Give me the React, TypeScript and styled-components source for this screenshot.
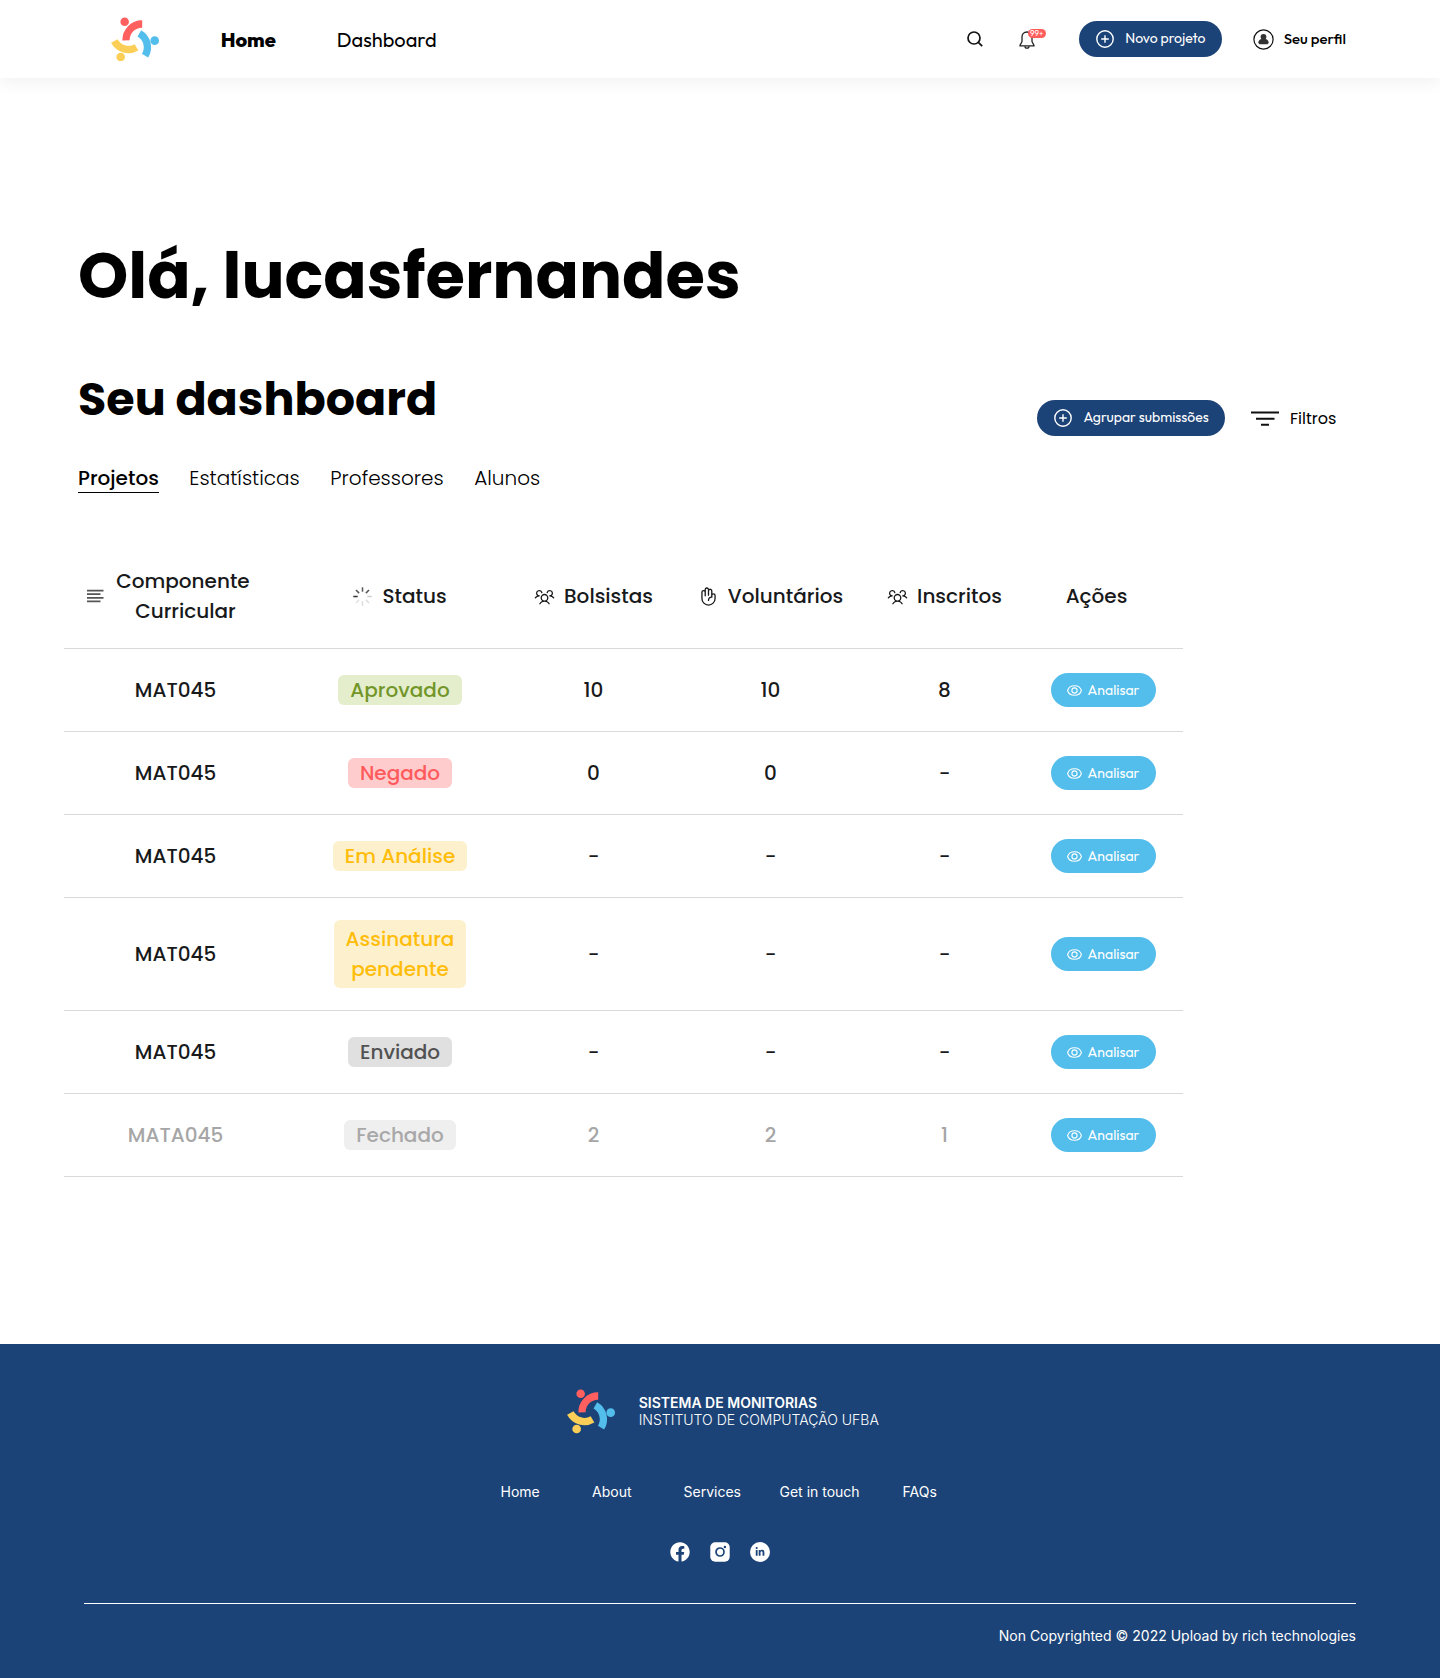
import React from "react";
import styled, { createGlobalStyle } from "styled-components";
import { PiUsersThree, PiHandPalm } from "react-icons/pi";
import { FaFacebook, FaLinkedinIn } from "react-icons/fa";

const navy = "#1c4377";
const sky = "#53bdeb";
const ink = "#18191b";
const poppins = `Poppins, Inter, "Liberation Sans", sans-serif`;
const outfit = `Outfit, Lato, "Liberation Sans", sans-serif`;

const GlobalStyle = createGlobalStyle`
  *, *::before, *::after { box-sizing: border-box; }
  body { margin: 0; background: #fff; color: ${ink}; font-family: ${poppins}; }
  h1, h2, p { margin: 0; }
  button { border: 0; padding: 0; background: none; color: inherit; font: inherit; white-space: nowrap; cursor: pointer; }
  svg { display: block; flex: none; }
`;

const Page = styled.div`
  width: 1440px;
  height: 1678px;
  display: flex;
  flex-direction: column;
`;

/* Top bar */
const TopBar = styled.header`
  flex: none;
  height: 78px;
  padding-left: 111px;
  display: flex;
  align-items: center;
  box-shadow: 0 4px 16px rgba(0, 0, 0, 0.06);
  font-family: ${outfit};
  color: #000;
`;
const Nav = styled.nav`
  width: 746px;
  margin-left: 61px;
  padding-top: 2px;
  display: flex;
  gap: 61px;
  font-size: 20px;
  line-height: 24px;
`;
const NavLink = styled.a<{ $active?: boolean }>`
  font-weight: ${(p) => (p.$active ? 800 : 370)};
`;
const BellButton = styled.button`
  position: relative;
  margin: 2px 44px 0 36px;
`;
const Badge = styled.span`
  position: absolute;
  left: 9px;
  top: -2px;
  width: 18px;
  height: 9px;
  border-radius: 5px;
  background: #ff5c5c;
  color: #fff;
  font-size: 8px;
  line-height: 9px;
  text-align: center;
`;
const PrimaryButton = styled.button<{ $width: number }>`
  width: ${(p) => p.$width}px;
  height: 36px;
  padding-left: 17px;
  display: flex;
  align-items: center;
  gap: 11.5px;
  border-radius: 18px;
  background: ${navy};
  color: #fff;
  font: 370 14px/18px ${outfit};
`;
const ButtonLabel = styled.span`
  padding-bottom: 2px;
`;
const Profile = styled.button`
  margin-left: 31px;
  display: flex;
  align-items: center;
  gap: 10px;
  font: 500 15px/20px ${outfit};
`;

/* Dashboard */
const Main = styled.main`
  flex: none;
  height: 1266px;
  padding: 150px 0 0 64px;
`;
const Greeting = styled.h1`
  padding-left: 14px;
  color: #000;
  font-size: 64px;
  line-height: 96px;
  font-weight: 700;
`;
const SectionHead = styled.div`
  width: 1272px;
  margin-top: 41px;
  padding-left: 14px;
  display: flex;
  justify-content: space-between;
`;
const SectionTitle = styled.h2`
  color: #000;
  font-size: 46px;
  line-height: 68px;
  font-weight: 700;
`;
const Tabs = styled.div`
  margin-top: 29px;
  display: flex;
  gap: 30.5px;
`;
const Tab = styled.button<{ $active?: boolean }>`
  height: 31px;
  border-bottom: 1px solid ${(p) => (p.$active ? "#000" : "transparent")};
  color: #000;
  font-size: 20px;
  line-height: 32px;
  font-weight: ${(p) => (p.$active ? 500 : 300)};
`;
const Actions = styled.div`
  height: 36px;
  margin-top: 35px;
  display: flex;
  align-items: center;
`;
const FilterButton = styled.button`
  width: 85px;
  margin-left: 26px;
  display: flex;
  align-items: center;
  gap: 11px;
  color: #000;
  font-size: 16px;
  line-height: 24px;
`;
const FilterLabel = styled.span`
  padding-top: 1px;
`;

/* Table */
const Table = styled.div`
  width: 1119px;
  margin-top: 51px;
`;
const Row = styled.div<{ $height: number; $muted?: boolean }>`
  height: ${(p) => p.$height}px;
  display: grid;
  grid-template-columns: 223px 226px 161px 193px 155px 161px;
  align-items: center;
  border-bottom: 1px solid #d9d9d9;
  font-size: 20px;
  line-height: 30px;
  font-weight: 500;
  color: ${(p) => (p.$muted ? "#a6a6a6" : ink)};
`;
const Cell = styled.div<{ $gap?: number; $padRight?: number }>`
  padding-right: ${(p) => p.$padRight ?? 0}px;
  display: flex;
  align-items: center;
  justify-content: center;
  gap: ${(p) => p.$gap ?? 0}px;
`;
const TwoLines = styled.div`
  text-align: center;
`;
const SecondLine = styled.div`
  padding-left: 5px;
`;
const tones = {
  green: ["#e4eecd", "#73962a"],
  red: ["#ffcccd", "#ff5a5c"],
  yellow: ["#fdf0cd", "#ffbd0a"],
  grey: ["#e0e0e0", "#525252"],
  muted: ["#efefef", "#a8a8a8"],
};
type Tone = keyof typeof tones;
const Pill = styled.div<{ $tone: Tone; $tall?: boolean }>`
  padding: ${(p) => (p.$tall ? 4 : 0)}px 12px;
  border-radius: 6px;
  background: ${(p) => tones[p.$tone][0]};
  color: ${(p) => tones[p.$tone][1]};
  text-align: center;
  white-space: pre-line;
`;
const AnalyseButton = styled.button`
  width: 105px;
  height: 34px;
  margin-left: 1px;
  display: flex;
  align-items: center;
  justify-content: center;
  gap: 6px;
  border-radius: 17px;
  background: ${sky};
  color: #fff;
  font: 370 14px/18px ${outfit};
`;

/* Footer */
const Footer = styled.footer`
  flex: 1;
  padding: 45px 84px 0;
  display: flex;
  flex-direction: column;
  align-items: center;
  background: ${navy};
  color: #fff;
  font: 400 14px/17px Inter, "Liberation Sans", sans-serif;
`;
const Brand = styled.div`
  width: 306px;
  display: flex;
  align-items: center;
  gap: 23px;
  white-space: nowrap;
`;
const BrandName = styled.div<{ $weight: number }>`
  font-weight: ${(p) => p.$weight};
`;
const FooterLinks = styled.nav`
  width: 439px;
  margin-top: 49px;
  display: grid;
  grid-template-columns: 91.5px 91.5px 96px 123px auto;
  white-space: nowrap;
`;
const Socials = styled.div`
  margin-top: 42px;
  display: flex;
  gap: 20px;
`;
const LinkedinDisc = styled.span`
  width: 20px;
  height: 20px;
  display: flex;
  align-items: center;
  justify-content: center;
  border-radius: 50%;
  background: #fff;
  color: ${navy};
`;
const Legal = styled.div`
  width: 100%;
  margin-top: 41px;
  padding-top: 23px;
  border-top: 1px solid #fff;
  text-align: right;
`;

const Logo = () => (
  <svg width="48.7" height="44.7" viewBox="63 50 146 134" fill="none" strokeWidth="22">
    <circle cx="104" cy="64" r="12.8" fill="#ff5f5e" />
    <path d="M156.500 71A48 48 0 0 0 108 120" stroke="#ff5f5e" />
    <circle cx="194" cy="121" r="13" fill="#53bdeb" />
    <path d="M148 99A48 48 0 0 1 165 166" stroke="#53bdeb" />
    <circle cx="92" cy="170" r="13" fill="#fbcf57" />
    <path d="M73 122A48 48 0 0 0 139.500 141" stroke="#fbcf57" />
  </svg>
);
const SearchIcon = () => (
  <svg width="16" height="16" viewBox="0 0 16 16" fill="none" stroke="#111" strokeWidth="1.7">
    <circle cx="7" cy="7" r="6" />
    <path d="M11.300 11.300L15.200 15.200" />
  </svg>
);
const BellIcon = () => (
  <svg width="16" height="18" viewBox="0 0 16 18" fill="none" stroke="#222" strokeWidth="1.3">
    <path d="M8 1C4.800 1 3 3.300 3 6v4.200c0 1.600-2 2.700-2 4.600h14c0-1.900-2-3-2-4.600V6C13 3.300 11.200 1 8 1Z" />
    <path d="M6 15.200a2 2 0 0 0 4 0" />
  </svg>
);
const PlusIcon = () => (
  <svg width="18" height="18" viewBox="0 0 18 18" fill="none" stroke="#fff" strokeWidth="1.4">
    <circle cx="9" cy="9" r="8.200" />
    <path d="M9 5.200v7.600M5.200 9h7.600" />
  </svg>
);
const UserIcon = () => (
  <svg width="21" height="21" viewBox="0 0 21 21">
    <circle cx="10.500" cy="10.500" r="9.600" fill="none" stroke="#111" strokeWidth="1.200" />
    <circle cx="10.500" cy="7.800" r="2.900" fill="#333" />
    <path d="M5.400 13.200C5.400 11.200 7.300 10 8.600 9.900h3.800c1.300.1 3.200 1.300 3.200 3.300 0 1.500-1 2-2 2H7.400c-1 0-2-.5-2-2Z" fill="#333" />
  </svg>
);
const FilterIcon = () => (
  <svg width="28" height="15" viewBox="0 0 28 15" stroke="#111" strokeWidth="2">
    <path d="M0 1.500h28M5 7.700h18.500M10 13.700h8" />
  </svg>
);
const LinesIcon = () => (
  <svg width="17" height="14" viewBox="0 0 17 14" stroke="#555" strokeWidth="1.700">
    <path d="M0 1.700h16.500M0 5.200h13.500M0 8.800h16.500M0 12.300h13.500" />
  </svg>
);
const rays = ["#555", "#555", "#ccc", "#ddd", "#ddd", "#e2e2e2", "#333", "#555"];
const LoadingIcon = () => (
  <svg width="19" height="19" viewBox="-9.5 -9.5 19 19" strokeWidth="1.500">
    {rays.map((stroke, i) => (
      <path key={i} d="M0 -9.200V-4.800" stroke={stroke} transform={`rotate(${i * 45})`} />
    ))}
  </svg>
);
const EyeIcon = () => (
  <svg width="15" height="11" viewBox="0 0 15 11" fill="none" stroke="#fff" strokeWidth="1.100">
    <path d="M.6 5.500C1.500 2.300 4.300.7 7.500.7s6 1.600 6.900 4.800c-.9 3.200-3.700 4.800-6.900 4.800S1.500 8.700.6 5.500Z" />
    <circle cx="7.500" cy="5.500" r="2.600" />
  </svg>
);
const InstagramIcon = () => (
  <svg width="20" height="20" viewBox="0 0 20 20">
    <rect x=".3" y=".3" width="19.400" height="19.400" rx="5" fill="#fff" />
    <circle cx="10" cy="10" r="4" fill="none" stroke={navy} strokeWidth="1.700" />
    <circle cx="14.900" cy="5" r="1.200" fill={navy} />
  </svg>
);

interface Project {
  code: string;
  status: string;
  tone: Tone;
  tall?: boolean;
  counts: string[];
}
const projects: Project[] = [
  { code: "MAT045", status: "Aprovado", tone: "green", counts: ["10", "10", "8"] },
  { code: "MAT045", status: "Negado", tone: "red", counts: ["0", "0", "-"] },
  { code: "MAT045", status: "Em Análise", tone: "yellow", counts: ["-", "-", "-"] },
  { code: "MAT045", status: "Assinatura\npendente", tone: "yellow", tall: true, counts: ["-", "-", "-"] },
  { code: "MAT045", status: "Enviado", tone: "grey", counts: ["-", "-", "-"] },
  { code: "MATA045", status: "Fechado", tone: "muted", counts: ["2", "2", "1"] },
];

export default function App() {
  return (
    <Page>
      <GlobalStyle />
      <TopBar>
        <Logo />
        <Nav>
          <NavLink $active>Home</NavLink>
          <NavLink>Dashboard</NavLink>
        </Nav>
        <SearchIcon />
        <BellButton>
          <BellIcon />
          <Badge>99+</Badge>
        </BellButton>
        <PrimaryButton $width={143}>
          <PlusIcon />
          <ButtonLabel>Novo projeto</ButtonLabel>
        </PrimaryButton>
        <Profile>
          <UserIcon />
          Seu perfil
        </Profile>
      </TopBar>

      <Main>
        <Greeting>Olá, lucasfernandes</Greeting>
        <SectionHead>
          <div>
            <SectionTitle>Seu dashboard</SectionTitle>
            <Tabs>
              <Tab $active>Projetos</Tab>
              <Tab>Estatísticas</Tab>
              <Tab>Professores</Tab>
              <Tab>Alunos</Tab>
            </Tabs>
          </div>
          <Actions>
            <PrimaryButton $width={188}>
              <PlusIcon />
              <ButtonLabel>Agrupar submissões</ButtonLabel>
            </PrimaryButton>
            <FilterButton>
              <FilterIcon />
              <FilterLabel>Filtros</FilterLabel>
            </FilterButton>
          </Actions>
        </SectionHead>

        <Table>
          <Row $height={105}>
            <Cell $gap={12} $padRight={14}>
              <LinesIcon />
              <TwoLines>
                Componente
                <SecondLine>Curricular</SecondLine>
              </TwoLines>
            </Cell>
            <Cell $gap={10}><LoadingIcon />Status</Cell>
            <Cell $gap={9}><PiUsersThree size={21} />Bolsistas</Cell>
            <Cell $gap={9}><PiHandPalm size={21} />Voluntários</Cell>
            <Cell $gap={9}><PiUsersThree size={21} />Inscritos</Cell>
            <Cell $padRight={12}>Ações</Cell>
          </Row>
          {projects.map((p, i) => (
            <Row key={i} $height={p.tall ? 113 : 83} $muted={p.tone === "muted"}>
              <Cell>{p.code}</Cell>
              <Cell>
                <Pill $tone={p.tone} $tall={p.tall}>{p.status}</Pill>
              </Cell>
              {p.counts.map((n, j) => (
                <Cell key={j}>{n}</Cell>
              ))}
              <Cell>
                <AnalyseButton><EyeIcon />Analisar</AnalyseButton>
              </Cell>
            </Row>
          ))}
        </Table>
      </Main>

      <Footer>
        <Brand>
          <Logo />
          <div>
            <BrandName $weight={600}>SISTEMA DE MONITORIAS</BrandName>
            <BrandName $weight={300}>INSTITUTO DE COMPUTAÇÃO UFBA</BrandName>
          </div>
        </Brand>
        <FooterLinks>
          <a>Home</a>
          <a>About</a>
          <a>Services</a>
          <a>Get in touch</a>
          <a>FAQs</a>
        </FooterLinks>
        <Socials>
          <FaFacebook size={20} />
          <InstagramIcon />
          <LinkedinDisc><FaLinkedinIn size={10} /></LinkedinDisc>
        </Socials>
        <Legal>Non Copyrighted © 2022 Upload by rich technologies</Legal>
      </Footer>
    </Page>
  );
}
